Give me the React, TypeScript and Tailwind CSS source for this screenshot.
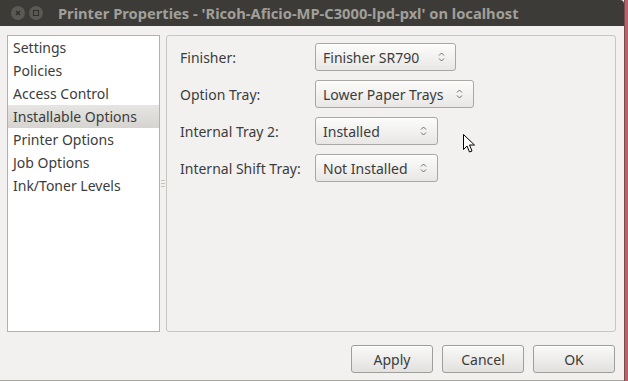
import React from 'react';

const font = { fontFamily: '"Noto Sans", "DejaVu Sans", sans-serif' };

const menuItems = [
  'Settings',
  'Policies',
  'Access Control',
  'Installable Options',
  'Printer Options',
  'Job Options',
  'Ink/Toner Levels',
];

const options = [
  { label: 'Finisher:', value: 'Finisher SR790', width: 'w-[141px]' },
  { label: 'Option Tray:', value: 'Lower Paper Trays', width: 'w-[159px]' },
  { label: 'Internal Tray 2:', value: 'Installed', width: 'w-[123px]' },
  { label: 'Internal Shift Tray:', value: 'Not Installed', width: 'w-[123px]' },
];

const Arrows: React.FC = () => (
  <svg width="7" height="12" viewBox="0 0 7 12" className="shrink-0">
    <path d="M1 4.5 L3.5 2 L6 4.5" fill="none" stroke="#6f6d69" strokeWidth="1" />
    <path d="M1 7.5 L3.5 10 L6 7.5" fill="none" stroke="#6f6d69" strokeWidth="1" />
  </svg>
);

const Combo: React.FC<{ value: string; width: string }> = ({ value, width }) => (
  <div
    className={`${width} h-[28px] flex items-center justify-between pl-[7px] pr-[10px] rounded-[3px] border border-[#a9a7a3] bg-gradient-to-b from-[#fcfcfb] to-[#e8e7e5] text-[14px] text-[#3c3c3c] shadow-[inset_0_1px_0_#ffffff]`}
  >
    <span>{value}</span>
    <Arrows />
  </div>
);

const DialogButton: React.FC<{ label: string }> = ({ label }) => (
  <div className="w-[82px] h-[28px] flex items-center justify-center rounded-[3px] border border-[#a09e9a] bg-gradient-to-b from-[#f9f9f8] to-[#e2e1df] text-[14px] text-[#3c3c3c] shadow-[inset_0_1px_0_#ffffff]">
    {label}
  </div>
);

export default function App() {
  return (
    <div className="relative w-[628px] h-[381px] flex bg-[#f2f1f0] overflow-hidden" style={font}>
      <div className="w-[624px] h-full flex flex-col border-b border-[#a8a6a1]">
        {/* Title bar */}
        <div className="h-[26px] shrink-0 flex items-center bg-[#3c3b37] rounded-tr-[4px]">
          <div className="flex items-center gap-[4px] pl-[11px]">
            <div className="w-[14px] h-[14px] rounded-full bg-[#5a5954] flex items-center justify-center">
              <svg width="6" height="6" viewBox="0 0 6 6">
                <path d="M1 1 L5 5 M5 1 L1 5" stroke="#2f2e2b" strokeWidth="1.4" />
              </svg>
            </div>
            <div className="w-[14px] h-[14px] rounded-full bg-[#5a5954] flex items-center justify-center">
              <div className="w-[6px] h-[6px] border border-[#2f2e2b]" />
            </div>
          </div>
          <span className="ml-[15px] text-[14.7px] font-bold text-[#a19f9a]">
            Printer Properties - 'Ricoh-Aficio-MP-C3000-lpd-pxl' on localhost
          </span>
        </div>

        {/* Content */}
        <div className="flex-1 flex flex-col pl-[7px] pr-[8px] pt-[9px]">
          <div className="h-[297px] flex">
            {/* Section list */}
            <div className="w-[153px] h-full bg-white border border-[#b4b1ac]">
              {menuItems.map((item) => (
                <div
                  key={item}
                  className={`h-[23px] flex items-center pl-[5px] pb-[1px] text-[14px] text-[#3c3c3c] ${
                    item === 'Installable Options'
                      ? 'bg-gradient-to-b from-[#e6e5e3] to-[#d5d4d1]'
                      : ''
                  }`}
                >
                  {item}
                </div>
              ))}
            </div>

            {/* Pane grip */}
            <div className="w-[6px] h-full flex flex-col items-center justify-center gap-[2px]">
              <div className="w-[4px] h-px bg-[#c6c3be]" />
              <div className="w-[4px] h-px bg-[#c6c3be]" />
              <div className="w-[4px] h-px bg-[#c6c3be]" />
            </div>

            {/* Options panel */}
            <div className="flex-1 h-full rounded-[3px] border border-[#c9c6c1] pt-[7px] pl-[13px] flex flex-col gap-[9px]">
              {options.map((opt) => (
                <div key={opt.label} className="flex items-center">
                  <span className="w-[135px] text-[14px] text-[#3c3c3c]">{opt.label}</span>
                  <Combo value={opt.value} width={opt.width} />
                </div>
              ))}
            </div>
          </div>

          {/* Dialog buttons */}
          <div className="flex justify-end gap-[9px] pt-[13px] pr-[1px]">
            <DialogButton label="Apply" />
            <DialogButton label="Cancel" />
            <DialogButton label="OK" />
          </div>
        </div>
      </div>
      <div className="w-[4px] h-full bg-[#bf5f6a] border-l border-[#7a4a4e]" />

      {/* Mouse pointer */}
      <svg
        className="absolute left-[463px] top-[134px]"
        width="13"
        height="20"
        viewBox="0 0 13 20"
      >
        <path
          d="M0.5 0.5 L0.5 15.5 L4 12 L6.5 18 L9 17 L6.5 11 L11.5 11 Z"
          fill="#ffffff"
          stroke="#000000"
          strokeWidth="1"
          strokeLinejoin="round"
        />
      </svg>
    </div>
  );
}
